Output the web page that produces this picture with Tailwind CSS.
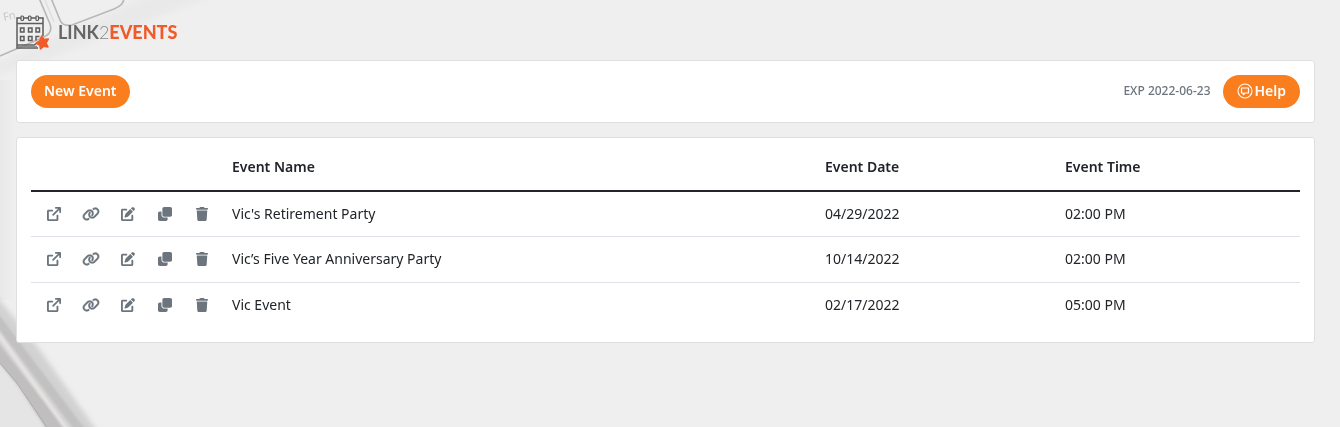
<!DOCTYPE html>
<html lang="en">
<head>
  <meta charset="UTF-8" />
  <meta name="viewport" content="width=device-width, initial-scale=1.0" />
  <title>Link2Events</title>
  <script src="https://cdn.jsdelivr.net/npm/@tailwindcss/browser@4"></script>
</head>
<body class="bg-[#efefef] min-h-screen overflow-x-hidden font-['Noto_Sans',sans-serif] text-sm text-[#212529]">

  <!-- Desk background: keyboard corner and pen -->
  <svg class="fixed left-0 top-0 -z-10" width="440" height="427" viewBox="0 0 440 427" fill="none" aria-hidden="true">
    <defs>
      <filter id="soft" x="-20%" y="-20%" width="140%" height="140%"><feGaussianBlur stdDeviation="2.5" /></filter>
      <filter id="fine" x="-20%" y="-20%" width="140%" height="140%"><feGaussianBlur stdDeviation="0.6" /></filter>
      <filter id="mid" x="-20%" y="-20%" width="140%" height="140%"><feGaussianBlur stdDeviation="1.2" /></filter>
      <linearGradient id="shade" x1="0" y1="0" x2="1" y2="0">
        <stop offset="0" stop-color="#e9e9e9" />
        <stop offset="1" stop-color="#efefef" />
      </linearGradient>
    </defs>
    <path d="M-5 64L150 -5H215L60 54L-5 76Z" fill="#e9e9e9" filter="url(#soft)" />
    <path d="M0 80H16V300H0Z" fill="url(#shade)" />
    <g filter="url(#fine)" stroke="#b8b8b8" stroke-width="1.7">
      <path d="M39 -2L50 24Q53 33 44 37L0 56" />
      <path d="M51 -2L60 20Q63 27 72 25L114 9Q124 5 124 -2" />
      <path d="M44 -2L54 22" stroke="#e0e0e0" />
    </g>
    <text x="4" y="21" font-size="11" fill="#c8c8c8" transform="rotate(-12 4 21)">Fn</text>
    <path d="M-4 358L16 384L48 432H-4Z" fill="#e5e5e5" />
    <g filter="url(#soft)">
      <path d="M-10 288L40 350L100 435H60L-10 340Z" fill="#d3d2d2" />
    </g>
    <g filter="url(#mid)">
      <path d="M-4 340L70 435H50L18 386L-4 359Z" fill="#c0bebe" />
      <path d="M-4 318L84 435" stroke="#c2c1c1" stroke-width="9" />
      <path d="M-4 331L71 435" stroke="#e6e4e2" stroke-width="4" />
    </g>
    <path d="M-4 358L17 383L50 432" stroke="#a9a8a8" stroke-width="1" filter="url(#fine)" />
  </svg>

  <svg class="hidden" aria-hidden="true">
    <symbol id="icon-open" viewBox="0 0 512 512">
      <path d="M320 0c-17.7 0-32 14.3-32 32s14.3 32 32 32h82.7L201.4 265.4c-12.5 12.5-12.5 32.8 0 45.3s32.8 12.5 45.3 0L448 109.3V192c0 17.7 14.3 32 32 32s32-14.3 32-32V32c0-17.7-14.3-32-32-32H320zM56 96C25 96 0 121 0 152V456c0 31 25 56 56 56H360c31 0 56-25 56-56V320c0-18-14-34-34-34s-34 16-34 34V444H68V164H192c18 0 34-14 34-34s-16-34-34-34H56z" />
    </symbol>
    <symbol id="icon-link" viewBox="0 0 640 512">
      <path stroke="currentColor" stroke-width="10" d="M579.8 267.7c56.5-56.5 56.5-148 0-204.5c-50-50-128.8-56.5-186.3-15.4l-1.6 1.1c-14.4 10.3-17.7 30.3-7.4 44.6s30.3 17.7 44.6 7.4l1.6-1.1c32.1-22.9 76-19.3 103.8 8.6c31.5 31.5 31.5 82.5 0 114L422.3 334.8c-31.5 31.5-82.5 31.5-114 0c-27.9-27.9-31.5-71.8-8.6-103.8l1.1-1.6c10.3-14.4 6.9-34.4-7.4-44.6s-34.4-6.9-44.6 7.4l-1.1 1.6C206.5 251.2 213 330 263 380c56.5 56.5 148 56.5 204.5 0L579.8 267.7zM60.2 244.3c-56.5 56.5-56.5 148 0 204.5c50 50 128.8 56.5 186.3 15.4l1.6-1.1c14.4-10.3 17.7-30.3 7.4-44.6s-30.3-17.7-44.6-7.4l-1.6 1.1c-32.1 22.9-76 19.3-103.8-8.6C74 372 74 321 105.5 289.5L217.7 177.2c31.5-31.5 82.5-31.5 114 0c27.9 27.9 31.5 71.8 8.6 103.9l-1.1 1.6c-10.3 14.4-6.9 34.4 7.4 44.6s34.4 6.9 44.6-7.4l1.1-1.6C433.5 260.8 427 182 377 132c-56.5-56.5-148-56.5-204.5 0L60.2 244.3z" />
    </symbol>
    <symbol id="icon-edit" viewBox="0 0 512 512">
      <path d="M471.6 21.7c-21.9-21.9-57.3-21.9-79.2 0L362.3 51.7l97.9 97.9 30.1-30.1c21.9-21.9 21.9-57.3 0-79.2L471.6 21.7zm-299.2 220c-6.1 6.1-10.8 13.6-13.5 21.9l-29.6 88.8c-2.9 8.6-.6 18.1 5.8 24.6s15.9 8.7 24.6 5.8l88.8-29.6c8.2-2.7 15.7-7.4 21.9-13.5L437.7 172.3 339.7 74.3 172.4 241.7zM56 64C25 64 0 89 0 120V456c0 31 25 56 56 56H392c31 0 56-25 56-56V320c0-18-14-34-34-34s-34 16-34 34V444H68V132H192c18 0 34-14 34-34s-16-34-34-34H56z" />
    </symbol>
    <symbol id="icon-clone" viewBox="0 0 512 512">
      <path d="M0 224c0-35.3 28.7-64 64-64h64v128c0 53 43 96 96 96h128v64c0 35.3-28.7 64-64 64H64c-35.3 0-64-28.7-64-64V224zM224 0h224c35.3 0 64 28.7 64 64v224c0 35.3-28.7 64-64 64H224c-35.3 0-64-28.7-64-64V64c0-35.3 28.7-64 64-64z" />
    </symbol>
    <symbol id="icon-trash" viewBox="0 0 448 512">
      <path d="M135.2 17.7L128 32H32C14.3 32 0 46.3 0 64S14.3 96 32 96H416c17.7 0 32-14.3 32-32s-14.3-32-32-32H320l-7.2-14.3C307.4 6.8 296.3 0 284.2 0H163.8c-12.1 0-23.2 6.8-28.6 17.7zM416 128H32L53.2 467c1.6 25.3 22.6 45 47.9 45H346.9c25.3 0 46.3-19.7 47.9-45L416 128z" />
    </symbol>
  </svg>

  <div class="pl-4 pr-[25px]">
    <header class="flex h-15 items-center pt-1">
      <a href="#" class="flex items-center gap-2 font-['Lato',sans-serif] text-[18px] leading-none">
        <svg width="34" height="36" viewBox="0 0 34 36" fill="none" stroke="#5c5c5c" stroke-width="1.5" aria-hidden="true">
          <path d="M27 22V4H1V34H22M1 9.5H27M1 31H18L21 29" />
          <path d="M2 32.5H21" stroke="#8c8c8c" />
          <g fill="#eee" stroke-width="1.2">
            <rect x="5" y="2" width="2.5" height="4.5" rx="1" />
            <rect x="12.5" y="2" width="2.5" height="4.5" rx="1" />
            <rect x="20" y="2" width="2.5" height="4.5" rx="1" />
          </g>
          <path d="M4.5 14h3.5v4H4.500zM12.500 14h3.500v4h-3.500zM20 14h3.500v4h-3.500zM4.500 22.500h3.500v4H4.500zM12.500 22.500h3.500v4h-3.500zM23.500 22.500H20v4" />
          <path d="M25.600 22L28 25.600L32.300 25.100L30 29L32 32.900L27.600 32.300L24.600 35L23.700 31.200L20 29.200L23.700 26.900Z" fill="#f15a29" stroke="#f15a29" stroke-linejoin="round" />
        </svg>
        <span><span class="font-bold text-[#666]">LINK</span><span class="font-light text-[#888]">2</span><span class="font-black text-[#f15a29]">EVENTS</span></span>
      </a>
    </header>

    <main class="flex flex-col gap-3.5">
      <div class="flex items-center justify-between rounded-[3px] border border-[#dfdfdf] bg-white p-3.5">
        <button type="button" class="h-[33px] rounded-full bg-[#fa7d1e] px-[13px] pb-0.5 font-semibold text-white">New Event</button>
        <div class="flex items-center gap-3">
          <span class="pb-0.5 text-xs font-medium text-[#6c757d]">EXP 2022-06-23</span>
          <button type="button" class="flex h-[33px] items-center gap-0.5 rounded-full bg-[#fa7d1e] px-3.5 pb-0.5 font-semibold text-white">
            <svg width="16" height="16" viewBox="0 0 16 16" fill="none" stroke="currentColor" aria-hidden="true">
              <circle cx="8" cy="8" r="7" stroke-width="1.1" />
              <path d="M4.500 5h7v5h-3.400L6.300 11.700V10H4.500z" stroke-width="1.2" stroke-linejoin="round" />
            </svg>
            Help
          </button>
        </div>
      </div>

      <div class="rounded-[3px] border border-[#dfdfdf] bg-white p-3.5">
        <table class="w-full table-fixed text-left">
          <thead>
            <tr class="h-[39px] border-b-2 border-[#212529]">
              <th class="w-[193px]" aria-label="Actions"></th>
              <th class="px-2 pb-2 font-semibold">Event Name</th>
              <th class="w-[240px] px-2 pb-2 font-semibold">Event Date</th>
              <th class="w-[243px] px-2 pb-2 font-semibold">Event Time</th>
            </tr>
          </thead>
          <tbody id="events" class="divide-y divide-[#dee2e6]"></tbody>
        </table>
      </div>
    </main>
  </div>

  <script>
    const events = [
      { name: "Vic's Retirement Party", date: "04/29/2022", time: "02:00 PM" },
      { name: "Vic’s Five Year Anniversary Party", date: "10/14/2022", time: "02:00 PM" },
      { name: "Vic Event", date: "02/17/2022", time: "05:00 PM" },
    ];

    const actions = [
      { icon: "icon-open", label: "Open" },
      { icon: "icon-link", label: "Copy link" },
      { icon: "icon-edit", label: "Edit" },
      { icon: "icon-clone", label: "Duplicate" },
      { icon: "icon-trash", label: "Delete" },
    ];

    const buttons = actions.map(a => `
      <button type="button" aria-label="${a.label}" class="flex h-8 items-center justify-center">
        <svg class="h-3.5 w-[18px] fill-current" aria-hidden="true"><use href="#${a.icon}" /></svg>
      </button>`).join("");

    document.getElementById("events").innerHTML = events.map(e => `
      <tr class="h-[46px] first:h-[45px]">
        <td><div class="ml-[5px] grid w-[184px] grid-cols-5 text-[#6c757d]">${buttons}</div></td>
        <td class="px-2">${e.name}</td>
        <td class="px-2">${e.date}</td>
        <td class="px-2">${e.time}</td>
      </tr>`).join("");
  </script>
</body>
</html>
